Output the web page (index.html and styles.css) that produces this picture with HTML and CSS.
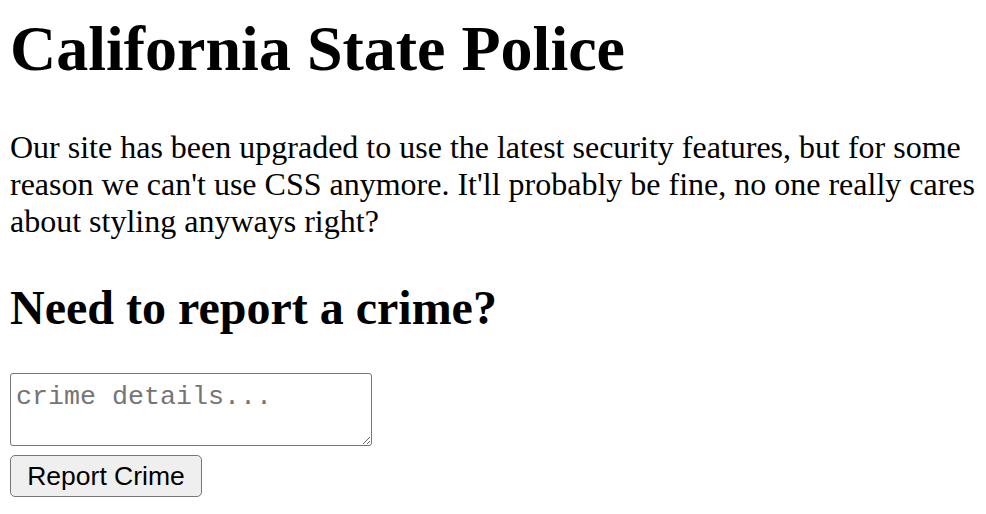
FILE: index.html
```html
<!DOCTYPE html>
<html>
<head>
<meta charset="utf-8">
<title>California State Police</title>
<link rel="stylesheet" href="styles.css">
</head>
<body>
<h1 class="title">California State Police</h1>
<p class="intro">Our site has been upgraded to use the latest security features, but for some reason we can't use CSS anymore. It'll probably be fine, no one really cares about styling anyways right?</p>
<h2 class="subtitle">Need to report a crime?</h2>
<form class="report">
<textarea class="details" placeholder="crime details..."></textarea>
<button type="button" class="submit">Report Crime</button>
</form>
</body>
</html>
```
FILE: styles.css
```css
html, body {
  background: #ffffff;
}
body {
  margin: 0 10px;
  padding-top: 12px;
  font-family: "Liberation Serif", "Times New Roman", serif;
  font-size: 32px;
  color: #000;
}
.title {
  font-size: 64px;
  font-weight: bold;
  margin: 0 0 43px;
  line-height: normal;
}
.intro {
  margin: 0 0 40px;
  line-height: normal;
}
.subtitle {
  font-size: 48px;
  font-weight: bold;
  margin: 0 0 38px;
  line-height: normal;
}
.report {
  display: flex;
  flex-direction: column;
  align-items: flex-start;
  gap: 9px;
}
.details {
  box-sizing: border-box;
  width: 362px;
  height: 73px;
  margin: 0;
  padding: 8px 5px 4px;
  border: 1px solid #767676;
  border-radius: 3px;
  font-family: "Liberation Mono", "Courier New", monospace;
  font-size: 26.67px;
  line-height: 30px;
  color: #000;
  background: #fff;
}
.details::placeholder {
  color: #757575;
}
.submit {
  box-sizing: border-box;
  width: 192px;
  height: 42px;
  margin: 0;
  padding: 0 12px;
  border: 1px solid #767676;
  border-radius: 5px;
  background: #efefef;
  font-family: "Liberation Sans", Arial, Helvetica, sans-serif;
  font-size: 26.5px;
  color: #000;
}
```
